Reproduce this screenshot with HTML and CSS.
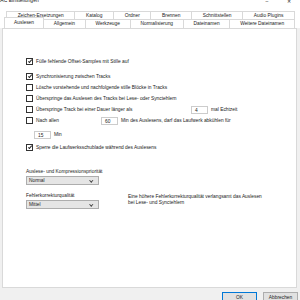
FILE: index.html
```html
<!DOCTYPE html>
<html lang="de">
<head>
  <meta charset="UTF-8">
  <meta name="viewport" content="width=device-width, initial-scale=1">
  <title>EAC Einstellungen</title>
  <link rel="stylesheet" href="styles.css">
</head>
<body>
  <div class="window">
    <div class="titlebar">
      <span class="title">EAC Einstellungen</span>
      <span class="ctrl min">&#8211;</span>
      <span class="ctrl close">&#10005;</span>
    </div>
    <div class="tabs">
      <div class="tab-row back">
        <div class="tab">Zeichen-Ersetzungen</div>
        <div class="tab">Katalog</div>
        <div class="tab">Ordner</div>
        <div class="tab">Brennen</div>
        <div class="tab">Schnittstellen</div>
        <div class="tab">Audio Plugins</div>
      </div>
      <div class="tab-row front">
        <div class="tab active">Auslesen</div>
        <div class="tab">Allgemein</div>
        <div class="tab">Werkzeuge</div>
        <div class="tab">Normalisierung</div>
        <div class="tab">Dateinamen</div>
        <div class="tab">Weitere Dateinamen</div>
      </div>
    </div>
    <div class="panel">
      <div class="opt first"><span class="cb on"></span>Fülle fehlende Offset-Samples mit Stille auf</div>
      <div class="opt gap"><span class="cb on"></span>Synchronisierung zwischen Tracks</div>
      <div class="opt"><span class="cb"></span>Lösche vorstehende und nachfolgende stille Blöcke in Tracks</div>
      <div class="opt"><span class="cb"></span>Überspringe das Auslesen des Tracks bei Lese- oder Synctehlern</div>
      <div class="opt"><span class="cb"></span><span class="lbl long">Überspringe Track bei einer Dauer länger als</span><span class="field">4</span>mal Echtzeit</div>
      <div class="opt"><span class="cb"></span><span class="lbl short">Nach allen</span><span class="field">60</span>Min des Auslesens, darf das Laufwerk abkühlen für</div>
      <div class="opt sub"><span class="field">15</span>Min</div>
      <div class="opt"><span class="cb on"></span>Sperre die Laufwerksschublade während des Auslesens</div>

      <div class="group">
        <div class="label">Auslese- und Kompressionspriorität</div>
        <div class="select">Normal<span class="chev"></span></div>
      </div>
      <div class="group quality">
        <div class="col">
          <div class="label">Fehlerkorrekturqualität</div>
          <div class="select">Mittel<span class="chev"></span></div>
        </div>
        <div class="hint">Eine höhere Fehlerkorrekturqualität verlangsamt das Auslesen<br>bei Lese- und Synctehlern</div>
      </div>
    </div>
    <div class="buttons">
      <button class="btn default">OK</button>
      <button class="btn">Abbrechen</button>
    </div>
  </div>
</body>
</html>
```

FILE: styles.css
```css
body {
  margin: 0;
  background: #f0f0f0;
  font-family: "Liberation Sans", Arial, sans-serif;
  font-size: 4.85px;
  color: #222;
}
.window {
  width: 300px;
  height: 300px;
  overflow: hidden;
}
.titlebar {
  height: 11px;
  background: #fff;
  display: flex;
  align-items: flex-start;
}
.title {
  margin: -3px 0 0 -3px;
  font-size: 5px;
  flex: 1;
}
.ctrl {
  width: 22px;
  text-align: center;
  font-size: 5px;
  margin-top: -2px;
}
.tabs {
  background: #fff;
}
.tab-row {
  display: flex;
  height: 8px;
}
.tab-row.back {
  margin: 0 5px 0 7px;
}
.tab-row.front {
  margin: 0 5px 0 5px;
  height: 9px;
}
.tab {
  flex: auto;
  text-align: center;
  line-height: 8px;
  border: 1px solid #d9d9d9;
  border-bottom: none;
  margin-left: -1px;
  background: #fff;
  white-space: nowrap;
}
.tab.active {
  flex: 0 0 38px;
  margin-top: -2px;
  line-height: 10px;
  position: relative;
  z-index: 1;
}
.panel {
  margin: 0 3px 0 2px;
  height: 260px;
  background: #fff;
  border: 1px solid #d9d9d9;
  box-sizing: border-box;
  padding: 27px 0 0 23px;
}
.opt {
  display: flex;
  align-items: center;
  height: 11px;
  white-space: nowrap;
}
.opt.gap {
  margin-top: 4px;
}
.opt.sub {
  margin: 3px 0 2px;
  padding-left: 8px;
}
.cb {
  width: 5px;
  height: 5px;
  border: 1px solid #333;
  background: #fff;
  margin-right: 3px;
  flex: none;
  position: relative;
}
.cb.on::after {
  content: "";
  position: absolute;
  left: 1.5px;
  top: 0;
  width: 1.3px;
  height: 3px;
  border: solid #222;
  border-width: 0 0.8px 0.8px 0;
  transform: rotate(40deg);
}
.lbl {
  flex: none;
}
.lbl.long {
  width: 155px;
}
.lbl.short {
  width: 65px;
}
.field {
  width: 17px;
  height: 8px;
  line-height: 8px;
  border: 1px solid #ccc;
  box-sizing: border-box;
  padding-left: 3px;
  margin-right: 3px;
  flex: none;
}
.group {
  margin-top: 15px;
}
.label {
  height: 7px;
  line-height: 7px;
}
.select {
  width: 73px;
  height: 9px;
  line-height: 7px;
  margin-top: 1px;
  background: #e5e5e5;
  border: 1px solid #adadad;
  box-sizing: border-box;
  padding-left: 2px;
  position: relative;
}
.chev {
  position: absolute;
  right: 6px;
  top: 1.5px;
  width: 1.5px;
  height: 1.5px;
  border: solid #444;
  border-width: 0 0.6px 0.6px 0;
  transform: rotate(45deg);
}
.quality {
  margin-top: 7px;
  display: flex;
  gap: 29px;
}
.hint {
  margin-top: 2px;
  line-height: 6px;
}
.buttons {
  display: flex;
  justify-content: flex-end;
  gap: 6px;
  padding: 4px 2px 0 0;
}
.btn {
  width: 35px;
  height: 11px;
  padding: 0;
  font-family: inherit;
  font-size: 4.85px;
  color: #222;
  background: #e1e1e1;
  border: 1px solid #adadad;
}
.btn.default {
  border-color: #0078d7;
}
```
